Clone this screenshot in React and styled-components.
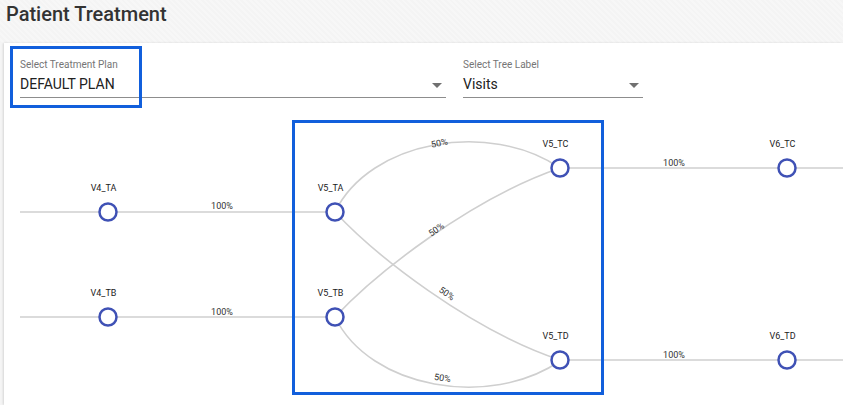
import React from 'react';
import styled, { createGlobalStyle } from 'styled-components';

const GlobalStyle = createGlobalStyle`
  html, body {
    margin: 0;
    padding: 0;
    background: #f5f5f5;
    font-family: Roboto, "Liberation Sans", Arial, sans-serif;
    overflow: hidden;
  }
`;

const Page = styled.div`
  width: 843px;
  height: 405px;
  overflow: hidden;
`;

const Header = styled.h1`
  box-sizing: border-box;
  height: 43px;
  margin: 0;
  padding: 2px 0 0 6px;
  font-size: 20px;
  line-height: 24px;
  font-weight: 500;
  color: #333;
  background: repeating-linear-gradient(45deg, #f4f4f4 0 2px, #f7f7f7 2px 4px);
`;

const Card = styled.div`
  margin-left: 4px;
  background: #fff;
  box-shadow: -1px 0 2px rgba(0, 0, 0, 0.12);
  height: 362px;
`;

const Filters = styled.div`
  display: flex;
  gap: 17px;
  padding: 15px 0 0 16px;
`;

const Field = styled.div`
  position: relative;
  width: ${(p) => p.width}px;
`;

const Label = styled.div`
  font-size: 10px;
  line-height: 13px;
  color: #757575;
`;

const ValueRow = styled.div`
  display: flex;
  align-items: center;
  justify-content: space-between;
  margin-top: 3px;
  padding-bottom: 3px;
  border-bottom: 1px solid #8d8d8d;
`;

const Value = styled.span`
  font-size: 14px;
  line-height: 20px;
  color: #212121;
`;

const Caret = styled.span`
  width: 0;
  height: 0;
  margin: 3px 4px 0 0;
  border-left: 5px solid transparent;
  border-right: 5px solid transparent;
  border-top: 5px solid #707070;
`;

const Highlight = styled.div`
  position: absolute;
  box-sizing: border-box;
  border: 3px solid #115fdc;
  left: ${(p) => p.left}px;
  top: ${(p) => p.top}px;
  width: ${(p) => p.w}px;
  height: ${(p) => p.h}px;
  pointer-events: none;
`;

const GraphArea = styled.div`
  position: relative;
  margin-top: 10px;
  height: 297px;
`;

const Graph = styled.svg`
  display: block;
  font-family: Roboto, "Liberation Sans", Arial, sans-serif;
`;

const Select = ({ width, label, value, children }) => (
  <Field width={width}>
    <Label>{label}</Label>
    <ValueRow>
      <Value>{value}</Value>
      <Caret />
    </ValueRow>
    {children}
  </Field>
);

const nodes = [
  { id: 'V4_TA', x: 108, y: 212 },
  { id: 'V4_TB', x: 108, y: 317 },
  { id: 'V5_TA', x: 335, y: 212 },
  { id: 'V5_TB', x: 335, y: 317 },
  { id: 'V5_TC', x: 560, y: 168 },
  { id: 'V5_TD', x: 560, y: 360 },
  { id: 'V6_TC', x: 787, y: 168 },
  { id: 'V6_TD', x: 787, y: 360 },
];

const links = [
  { d: 'M20 212 H335' },
  { d: 'M20 317 H335' },
  { d: 'M560 168 H850' },
  { d: 'M560 360 H850' },
  { d: 'M335 212 C370 140 490 120 560 168' },
  { d: 'M335 317 C370 389 490 409 560 361' },
  { d: 'M335 212 C375 255 470 330 560 360' },
  { d: 'M335 317 C375 274 470 199 560 168' },
];

const edgeLabels = [
  { t: '100%', x: 222, y: 209, r: 0 },
  { t: '100%', x: 222, y: 315, r: 0 },
  { t: '100%', x: 674, y: 166, r: 0 },
  { t: '100%', x: 674, y: 358, r: 0 },
  { t: '50%', x: 440, y: 146, r: -12 },
  { t: '50%', x: 438, y: 232, r: -35 },
  { t: '50%', x: 445, y: 296, r: 35 },
  { t: '50%', x: 442, y: 381, r: 8 },
];

const App = () => {
  return (
    <Page>
      <GlobalStyle />
      <Header>Patient Treatment</Header>
      <Card>
        <Filters>
          <Select width={426} label="Select Treatment Plan" value="DEFAULT PLAN">
            <Highlight left={-10} top={-12} w={132} h={62} />
          </Select>
          <Select width={180} label="Select Tree Label" value="Visits" />
        </Filters>
        <GraphArea>
          <Graph width="839" height="297" viewBox="4 108 839 297">
            <g fill="none" stroke="#cfcfcf" strokeWidth="1.6">
              {links.map((l, i) => (
                <path key={i} d={l.d} />
              ))}
            </g>
            <g fontSize="9" fill="#333" textAnchor="middle">
              {edgeLabels.map((l, i) => (
                <text key={i} x={l.x} y={l.y} transform={`rotate(${l.r} ${l.x} ${l.y})`}>
                  {l.t}
                </text>
              ))}
            </g>
            {nodes.map((n) => (
              <g key={n.id}>
                <circle cx={n.x} cy={n.y} r="8.5" fill="#fff" stroke="#3f51b5" strokeWidth="2.5" />
                <text x={n.x - 4.5} y={n.y - 21.5} fontSize="9" fill="#222" textAnchor="middle">
                  {n.id}
                </text>
              </g>
            ))}
          </Graph>
          <Highlight left={288} top={12} w={312} h={275} />
        </GraphArea>
      </Card>
    </Page>
  );
};

export default App;
